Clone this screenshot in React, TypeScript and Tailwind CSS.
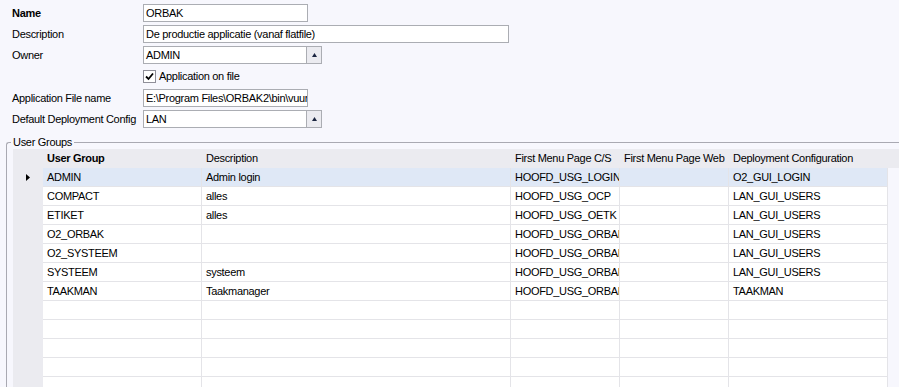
import type { ReactNode } from 'react';

const COLS = 'grid grid-cols-[30px_159px_309px_109px_109px_159px]';

const HEADERS = [
  { label: 'User Group', bold: true },
  { label: 'Description' },
  { label: 'First Menu Page C/S' },
  { label: 'First Menu Page Web' },
  { label: 'Deployment Configuration' },
];

const ROWS: string[][] = [
  ['ADMIN', 'Admin login', 'HOOFD_USG_LOGIN', '', 'O2_GUI_LOGIN'],
  ['COMPACT', 'alles', 'HOOFD_USG_OCP', '', 'LAN_GUI_USERS'],
  ['ETIKET', 'alles', 'HOOFD_USG_OETK', '', 'LAN_GUI_USERS'],
  ['O2_ORBAK', '', 'HOOFD_USG_ORBAK', '', 'LAN_GUI_USERS'],
  ['O2_SYSTEEM', '', 'HOOFD_USG_ORBAK', '', 'LAN_GUI_USERS'],
  ['SYSTEEM', 'systeem', 'HOOFD_USG_ORBAK', '', 'LAN_GUI_USERS'],
  ['TAAKMAN', 'Taakmanager', 'HOOFD_USG_ORBAK', '', 'TAAKMAN'],
  ['', '', '', '', ''],
  ['', '', '', '', ''],
  ['', '', '', '', ''],
  ['', '', '', '', ''],
  ['', '', '', '', ''],
];

function FormRow({ label, bold, children, className }: { label: string; bold?: boolean; children: ReactNode; className?: string }) {
  return (
    <div className={`flex h-[18px] items-center ${className ?? ''}`}>
      <div className={`w-[143px] pl-[12px] ${bold ? 'font-bold' : ''}`}>{label}</div>
      {children}
    </div>
  );
}

function TextBox({ value, width }: { value: string; width: string }) {
  return (
    <div className={`${width} h-[18px] overflow-hidden whitespace-nowrap border border-[#abadb3] bg-white px-[2px] leading-[16px]`}>
      {value}
    </div>
  );
}

function Combo({ value }: { value: string }) {
  return (
    <div className="flex h-[18px] w-[179px] border border-[#abadb3] bg-white">
      <div className="flex-1 overflow-hidden whitespace-nowrap px-[2px] leading-[16px]">{value}</div>
      <div className="flex w-[15px] items-center justify-center border-l border-[#abadb3] bg-[#ebebf0]">
        <svg width="5" height="4" viewBox="0 0 5 4">
          <polygon points="2.5,0 5,4 0,4" fill="#1b2540" />
        </svg>
      </div>
    </div>
  );
}

export default function App() {
  return (
    <div className="h-[387px] w-[899px] overflow-hidden bg-[#f7f7fd] font-['Liberation_Sans',Arial,sans-serif] text-[11px] tracking-[-0.3px] text-black">
      <div className="pt-[4px]">
        <FormRow label="Name" bold>
          <TextBox value="ORBAK" width="w-[165px]" />
        </FormRow>
        <FormRow label="Description" className="mt-[3px]">
          <TextBox value="De productie applicatie (vanaf flatfile)" width="w-[366px]" />
        </FormRow>
        <FormRow label="Owner" className="mt-[3px]">
          <Combo value="ADMIN" />
        </FormRow>
        <FormRow label="" className="mt-[3px]">
          <div className="flex items-center gap-[3px]">
            <div className="flex h-[13px] w-[13px] items-center justify-center border border-[#8f8f99] bg-white">
              <svg width="9" height="9" viewBox="0 0 9 9">
                <path d="M1 4.5 L3.5 7 L8 1.5" stroke="#000" strokeWidth="1.8" fill="none" />
              </svg>
            </div>
            <span>Application on file</span>
          </div>
        </FormRow>
        <FormRow label="Application File name" className="mt-[4px]">
          <TextBox value="E:\Program Files\ORBAK2\bin\vuurwerk.exe" width="w-[165px]" />
        </FormRow>
        <FormRow label="Default Deployment Config" className="mt-[3px]">
          <Combo value="LAN" />
        </FormRow>
      </div>

      <fieldset className="ml-[6px] mt-[8px] rounded-tl-[3px] border-l border-t border-[#a9a9b2] pl-[6px]">
        <legend className="-ml-[2px] px-[2px] leading-[13px]">User Groups</legend>
        <div>
          <div className={`${COLS} h-[19px] w-[886px] items-center bg-[#ebebf0]`}>
            <div />
            {HEADERS.map((h) => (
              <div key={h.label} className={`overflow-hidden whitespace-nowrap pl-[4px] ${h.bold ? 'font-bold' : ''}`}>
                {h.label}
              </div>
            ))}
          </div>
          {ROWS.map((row, i) => (
            <div key={i} className={COLS}>
              <div className="flex h-[19px] items-center bg-[#ebebf0] pl-[13px]">
                {i === 0 ? (
                  <svg width="4" height="7" viewBox="0 0 4 7">
                    <polygon points="0,0 4,3.5 0,7" fill="#000" />
                  </svg>
                ) : null}
              </div>
              {row.map((cell, j) => (
                <div
                  key={j}
                  className={`h-[19px] overflow-hidden whitespace-nowrap border-b border-r border-[#e4e4e8] pl-[4px] leading-[18px] ${
                    i === 0 ? 'bg-[#dfe8f6]' : 'bg-white'
                  }`}
                >
                  {cell}
                </div>
              ))}
            </div>
          ))}
        </div>
      </fieldset>
    </div>
  );
}
